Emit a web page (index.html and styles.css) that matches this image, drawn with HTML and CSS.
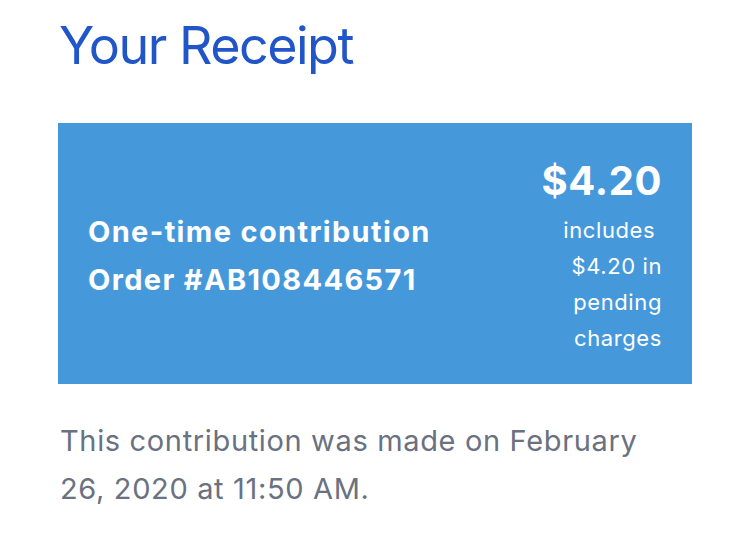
FILE: index.html
```html
<!DOCTYPE html>
<html lang="en">
<head>
<meta charset="utf-8">
<title>Your Receipt</title>
<link rel="stylesheet" href="styles.css">
</head>
<body>
<main class="page">
  <h1 class="title">Your Receipt</h1>
  <section class="receipt">
    <div class="receipt-info">
      <div class="receipt-type">One-time contribution</div>
      <div class="receipt-order">Order #AB108446571</div>
    </div>
    <div class="receipt-amount">
      <div class="amount">$4.20</div>
      <div class="pending">includes&nbsp;<wbr>$4.20 in pending charges</div>
    </div>
  </section>
  <p class="note">This contribution was made on February 26, 2020 at 11:50 AM.</p>
</main>
</body>
</html>
```

FILE: styles.css
```css
* { box-sizing: border-box; }
html, body { margin: 0; padding: 0; background: #ffffff; }
body {
  font-family: Inter, "Noto Sans", "Liberation Sans", sans-serif;
  -webkit-font-smoothing: antialiased;
}
.page {
  padding: 14px 57px 0 58px;
}
.title {
  margin: 0 0 0 1px;
  font-size: 52px;
  line-height: 64px;
  font-weight: 400;
  color: #2156c9;
  letter-spacing: -1.5px;
}
.receipt {
  margin-top: 45px;
  background: #4599db;
  color: #ffffff;
  display: flex;
  justify-content: space-between;
  align-items: center;
  padding: 28px 30px 24px 30px;
  min-height: 261px;
}
.receipt-info {
  font-size: 29px;
  font-weight: 700;
  line-height: 48px;
  letter-spacing: 1.35px;
}
.receipt-amount {
  display: flex;
  flex-direction: column;
  align-items: flex-end;
  text-align: right;
}
.amount {
  font-size: 40px;
  font-weight: 700;
  line-height: 52px;
  letter-spacing: 0.6px;
}
.pending {
  width: 112px;
  font-size: 22px;
  line-height: 36px;
  margin-top: 5px;
  letter-spacing: 0.6px;
}
.note {
  margin: 33px 0 0 2px;
  padding-right: 12px;
  font-size: 29px;
  line-height: 48px;
  letter-spacing: 0.65px;
  color: #6a7180;
}
```
